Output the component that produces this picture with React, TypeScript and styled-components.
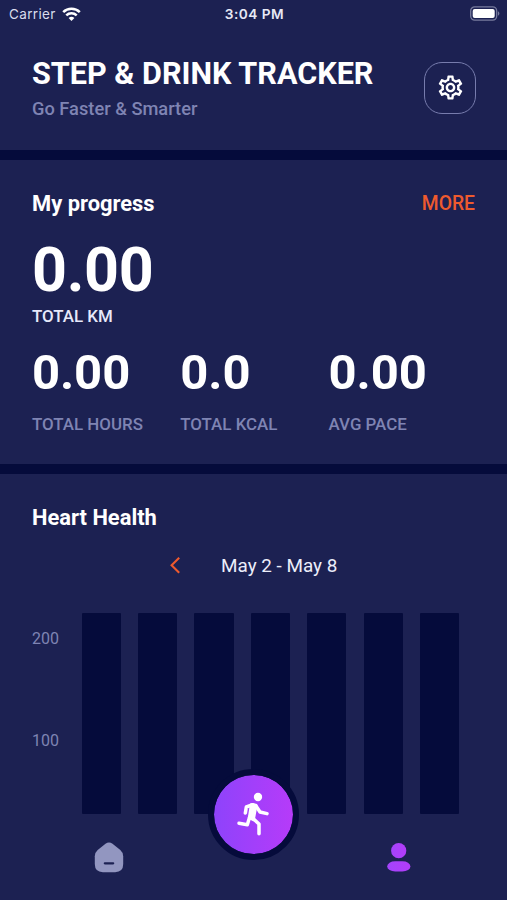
import React from 'react';
import styled, { createGlobalStyle } from 'styled-components';
import { MdOutlineSettings } from 'react-icons/md';

const color = {
  panel: '#1c2152',
  deep: '#050b3b',
  muted: '#7f84b3',
  accent: '#ee5a2e',
};

const GlobalStyle = createGlobalStyle`
  * { box-sizing: border-box; }
  body { margin: 0; background: ${color.panel}; }
  button { background: none; border: 0; padding: 0; font: inherit; color: inherit; display: block; }
  svg { display: block; }
`;

const Screen = styled.div`
  width: 507px;
  height: 900px;
  overflow: hidden;
  display: flex;
  flex-direction: column;
  background: ${color.panel};
  color: #fff;
  font-family: Roboto, sans-serif;
  position: relative;
`;

const StatusBar = styled.div`
  height: 28px;
  flex: none;
  padding: 0 7px 0 9px;
  display: grid;
  grid-template-columns: 1fr auto 1fr;
  align-items: center;
  font: 500 13.5px/28px Inter, sans-serif;
`;

const Carrier = styled.div`
  display: flex;
  align-items: center;
  gap: 6px;
  font-weight: 400;
  letter-spacing: 0.35px;
  color: #d9dcec;
`;

const Clock = styled.div`
  font-weight: 600;
  font-size: 13.7px;
  letter-spacing: 0.45px;
  color: #e6e8f5;
`;

const BatterySlot = styled.div`
  justify-self: end;
  padding-bottom: 1px;
`;

const Header = styled.header`
  height: 122px;
  flex: none;
  padding: 28px 31px 0 32px;
  display: flex;
  justify-content: space-between;
`;

const Title = styled.h1`
  margin: 0;
  font-size: 30.6px;
  line-height: 36px;
  font-weight: 700;
  white-space: nowrap;
`;

const Subtitle = styled.p`
  margin: 7px 0 0;
  font-size: 18.25px;
  line-height: 20px;
  font-weight: 500;
  color: ${color.muted};
`;

const SettingsButton = styled.button`
  && {
    width: 52px;
    height: 52px;
    margin-top: 6px;
    padding-bottom: 1px;
    display: grid;
    place-items: center;
    border: 1.4px solid #777cad;
    border-radius: 18px;
  }
`;

const Divider = styled.div`
  height: 10px;
  flex: none;
  background: ${color.deep};
`;

const Progress = styled.section`
  height: 304px;
  flex: none;
  padding: 31px 32px 0;
`;

const SectionHead = styled.div`
  display: flex;
  justify-content: space-between;
  align-items: center;
  height: 26px;
`;

const SectionTitle = styled.h2`
  margin: 0;
  font-size: 21.9px;
  line-height: 26px;
  font-weight: 700;
`;

const MoreLink = styled.button`
  && {
    font-size: 19.3px;
    line-height: 24px;
    font-weight: 500;
    color: ${color.accent};
  }
`;

const Value = styled.div<{ $large?: boolean }>`
  font-weight: 700;
  font-size: ${(p) => (p.$large ? 61 : 49)}px;
  letter-spacing: ${(p) => (p.$large ? -0.3 : -0.1)}px;
  line-height: ${(p) => (p.$large ? 72 : 60)}px;
`;

const Label = styled.div<{ $muted?: boolean }>`
  font-size: 16.9px;
  line-height: 20px;
  font-weight: 500;
  color: ${(p) => (p.$muted ? color.muted : '#e6e9fa')};
`;

const Total = styled.div`
  margin-top: 17px;
`;

const Stats = styled.div`
  display: grid;
  grid-template-columns: 148.3px 148.3px 1fr;
  margin-top: 17px;
`;

const Stat = styled.div`
  display: grid;
  row-gap: 11px;
`;

const Heart = styled.section`
  padding: 31px 0 0 32px;
  flex: 1;
`;

const WeekPicker = styled.div`
  display: flex;
  align-items: center;
  height: 24px;
  margin-top: 22px;
  padding-left: 137px;
  gap: 40px;
`;

const WeekRange = styled.span`
  font-size: 18.9px;
  line-height: 24px;
  padding-top: 1px;
  color: #eceefa;
`;

const Chart = styled.div`
  display: flex;
  margin-top: 36px;
  height: 201px;
`;

const Axis = styled.div`
  width: 49.7px;
  padding-top: 16px;
  display: flex;
  flex-direction: column;
  gap: 82px;
  font-size: 16px;
  line-height: 20px;
  color: ${color.muted};
`;

const Bars = styled.div`
  display: grid;
  grid-template-columns: repeat(7, 39.2px);
  column-gap: 17.2px;
`;

const Bar = styled.div`
  background: ${color.deep};
  border-radius: 1px;
`;

const TabBar = styled.nav`
  position: absolute;
  left: 0;
  right: 0;
  bottom: 0;
  height: 132px;
  display: flex;
  justify-content: space-between;
  align-items: flex-start;
  padding: 0 94px 0 94px;
`;

const Tab = styled.button`
  && { margin-top: 74px; width: 30px; }
`;

const RunButton = styled.button`
  && {
    width: 91px;
    height: 91px;
    margin-top: 1px;
    padding-top: 1px;
    border-radius: 50%;
    border: 6px solid ${color.deep};
    background: linear-gradient(90deg, #8e43fb, #b63bf9) padding-box;
    display: grid;
    place-items: center;
  }
`;

const WifiIcon = () => (
  <svg width="19" height="15" viewBox="0 0 19 15" fill="none" stroke="#fff" strokeWidth="2.5">
    <path d="M1.2 5.2a11.8 11.8 0 0 1 16.6 0" />
    <path d="M4.3 8.4a7.4 7.4 0 0 1 10.4 0" />
    <path d="M9.5 14 6.6 11.1a4.1 4.1 0 0 1 5.8 0Z" fill="#fff" stroke="none" />
  </svg>
);

const BatteryIcon = () => (
  <svg width="30" height="15" viewBox="0 0 30 15">
    <rect x="0.7" y="0.9" width="26" height="13.2" rx="4" fill="none" stroke="#777b9d" strokeWidth="1.3" />
    <rect x="2.7" y="2.9" width="22" height="9.2" rx="2" fill="#fff" />
    <path d="M28 5.3c1.9.8 1.9 3.6 0 4.4Z" fill="#777b9d" />
  </svg>
);

const ChevronIcon = () => (
  <svg width="12" height="18" viewBox="0 0 12 18" fill="none" stroke={color.accent} strokeWidth="2.1">
    <path d="M10.2 1.8 2.6 9.3l7.6 7.5" />
  </svg>
);

const RunnerIcon = () => (
  <svg width="36" height="48" viewBox="0 0 108 144" fill="none" stroke="#fff" strokeLinecap="round" strokeLinejoin="round">
    <circle cx="66" cy="18" r="12.5" fill="#fff" stroke="none" />
    <path d="M28 66 31 48 50 41 61 46 72 63 93 68" strokeWidth="10.5" />
    <path d="M46 41 60 43 52 86 40 80Z" strokeWidth="9" fill="#fff" />
    <path d="M41 78 34 101 9 97" strokeWidth="10.5" />
    <path d="M52 83 69 99 69 128" strokeWidth="10.5" />
  </svg>
);

const HomeIcon = () => (
  <svg width="30" height="31" viewBox="0 0 30 31">
    <path
      d="M11.5 1.8Q15 -0.7 18.5 1.8L26.3 7.9Q29.2 10.4 29.2 14.2V22.1Q29.2 30.2 21.1 30.2H8.9Q0.8 30.2 0.8 22.1V14.2Q0.8 10.4 3.7 7.9Z"
      fill="#9296c0"
    />
    <path d="M10.8 21.3h8.4" stroke={color.panel} strokeWidth="2.2" strokeLinecap="round" />
  </svg>
);

const ProfileIcon = () => (
  <svg width="30" height="31" viewBox="0 0 30 31">
    <defs>
      <linearGradient id="profile" x1="0" x2="1">
        <stop offset="0" stopColor="#a344fb" />
        <stop offset="1" stopColor="#b33cf9" />
      </linearGradient>
    </defs>
    <circle cx="15.7" cy="8.7" r="7.6" fill="url(#profile)" />
    <rect x="4.2" y="19.3" width="23.2" height="10.2" rx="8" ry="5.1" fill="url(#profile)" />
  </svg>
);

const stats = [
  { value: '0.00', label: 'TOTAL HOURS' },
  { value: '0.0', label: 'TOTAL KCAL' },
  { value: '0.00', label: 'AVG PACE' },
];

const days = ['mon', 'tue', 'wed', 'thu', 'fri', 'sat', 'sun'];

export default function App() {
  return (
    <>
      <GlobalStyle />
      <Screen>
        <StatusBar>
          <Carrier>
            Carrier
            <WifiIcon />
          </Carrier>
          <Clock>3:04 PM</Clock>
          <BatterySlot>
            <BatteryIcon />
          </BatterySlot>
        </StatusBar>
        <Header>
          <div>
            <Title>STEP &amp; DRINK TRACKER</Title>
            <Subtitle>Go Faster &amp; Smarter</Subtitle>
          </div>
          <SettingsButton aria-label="Settings">
            <MdOutlineSettings size={29} />
          </SettingsButton>
        </Header>
        <Divider />
        <Progress>
          <SectionHead>
            <SectionTitle>My progress</SectionTitle>
            <MoreLink>MORE</MoreLink>
          </SectionHead>
          <Total>
            <Value $large>0.00</Value>
            <Label>TOTAL KM</Label>
          </Total>
          <Stats>
            {stats.map((s) => (
              <Stat key={s.label}>
                <Value>{s.value}</Value>
                <Label $muted>{s.label}</Label>
              </Stat>
            ))}
          </Stats>
        </Progress>
        <Divider />
        <Heart>
          <SectionTitle>Heart Health</SectionTitle>
          <WeekPicker>
            <button aria-label="Previous week">
              <ChevronIcon />
            </button>
            <WeekRange>May 2 - May 8</WeekRange>
          </WeekPicker>
          <Chart>
            <Axis>
              <span>200</span>
              <span>100</span>
            </Axis>
            <Bars>
              {days.map((d) => (
                <Bar key={d} />
              ))}
            </Bars>
          </Chart>
        </Heart>
        <TabBar>
          <Tab aria-label="Home">
            <HomeIcon />
          </Tab>
          <RunButton aria-label="Start run">
            <RunnerIcon />
          </RunButton>
          <Tab aria-label="Profile">
            <ProfileIcon />
          </Tab>
        </TabBar>
      </Screen>
    </>
  );
}
